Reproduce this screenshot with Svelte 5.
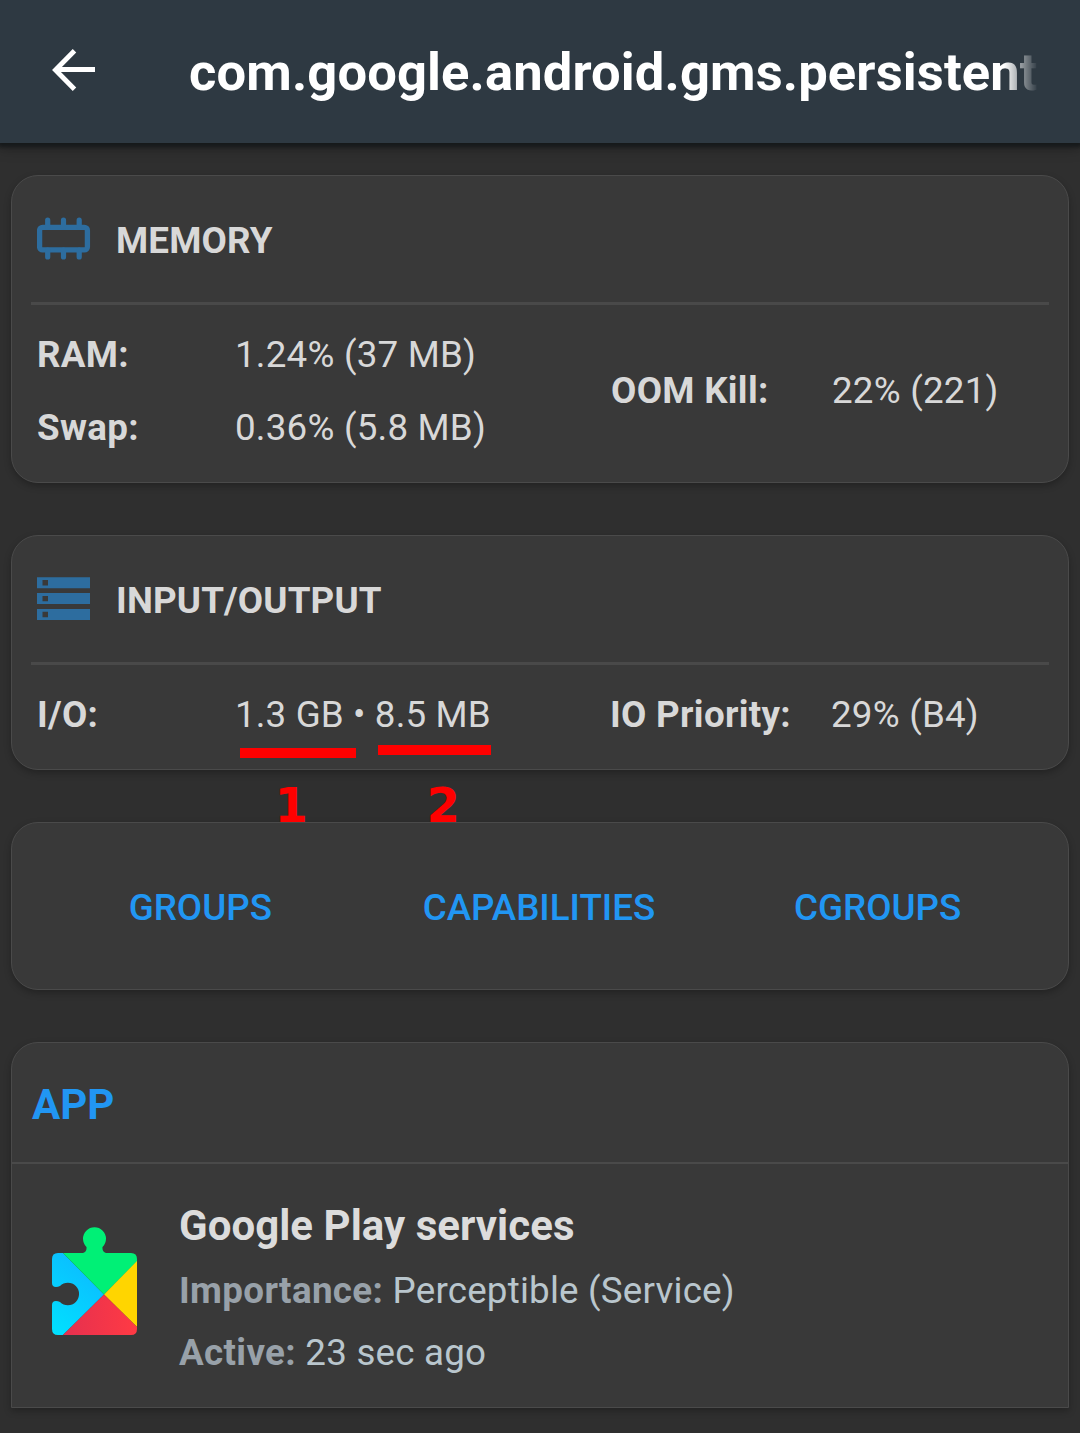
<script>
  const memory = [
    { label: 'RAM:', value: '1.24% (37 MB)' },
    { label: 'Swap:', value: '0.36% (5.8 MB)' },
  ];
  const actions = ['GROUPS', 'CAPABILITIES', 'CGROUPS'];
</script>

<div class="screen">
  <header class="toolbar">
    <svg class="back" viewBox="0 0 44 42" aria-label="Back">
      <path d="M22.5 1.8 3.5 21l19 19.2M4 20.500h39" fill="none" stroke="#fff" stroke-width="4.9" />
    </svg>
    <h1>com.google.android.gms.persistent</h1>
  </header>

  <main>
    <section class="card">
      <div class="head">
        <svg class="icon" viewBox="0 0 54 44">
          <rect x="2.6" y="10.3" width="47.8" height="22.6" rx="3" fill="none" stroke="#2d6d9f" stroke-width="5.3" />
          <path d="M10.700 10V3.2M26.500 10V3.2M42.200 10V3.2M10.700 33v7M26.500 33v7M42.200 33v7" fill="none" stroke="#2d6d9f" stroke-width="5.2" stroke-linecap="round" />
        </svg>
        <h2>MEMORY</h2>
      </div>
      <div class="rule"></div>
      <div class="body">
        <div class="col">
          {#each memory as row}
            <div class="row"><b>{row.label}</b><span>{row.value}</span></div>
          {/each}
        </div>
        <div class="col right">
          <div class="row"><b>OOM Kill:</b><span>22% (221)</span></div>
        </div>
      </div>
    </section>

    <section class="card">
      <div class="head">
        <svg class="icon" viewBox="0 0 54 44">
          <path fill="#2d6d9f" fill-rule="evenodd" d="M0 .2h53v11H0zM5.5 3v5.4H11V3zM0 16.1h53v11H0zM5.5 18.900v5.4H11v-5.4zM0 32h53v11H0zM5.5 34.800v5.4H11v-5.4z" />
        </svg>
        <h2>INPUT/OUTPUT</h2>
      </div>
      <div class="rule"></div>
      <div class="body">
        <div class="col">
          <div class="row"><b>I/O:</b><span class="traffic">1.3 GB • 8.5 MB
            <i class="mark first"></i><i class="mark second"></i>
            <em class="one">1</em><em class="two">2</em>
          </span></div>
        </div>
        <div class="col right io">
          <div class="row"><b>IO Priority:</b><span>29% (B4)</span></div>
        </div>
      </div>
    </section>

    <section class="card actions">
      {#each actions as action}
        <button>{action}</button>
      {/each}
    </section>

    <section class="card app">
      <div class="app-head">APP</div>
      <div class="app-body">
        <svg class="logo" viewBox="0 0 85 108">
          <defs>
            <linearGradient id="blue" x1="0" y1="1" x2="0.5" y2="0">
              <stop offset="0" stop-color="#00e2ff" />
              <stop offset="1" stop-color="#0cbcff" />
            </linearGradient>
            <linearGradient id="red" x1="0" x2="1">
              <stop offset="0" stop-color="#e5304f" />
              <stop offset="1" stop-color="#ff3a44" />
            </linearGradient>
            <clipPath id="piece">
              <path d="M6 26H31Q35 25 34.500 20A11.500 11.500 0 1 1 50.500 20Q50 25 54 26H79Q85 26 85 32V102Q85 108 79 108H6Q0 108 0 102V78Q0 74 4 74Q6 74 8 75A11.200 11.200 0 1 0 8 59Q6 60 4 60Q0 60 0 56V32Q0 26 6 26Z" />
            </clipPath>
          </defs>
          <g clip-path="url(#piece)">
            <path fill="url(#blue)" d="M0 26h11l41 41.500L11 108H0z" />
            <path fill="#00f076" d="M11 26 20 0h45l20 26v8.500L52 67.500z" />
            <path fill="#ffd500" d="M85 34v66L52 67.500z" />
            <path fill="url(#red)" d="M11 108 52 67.500 85 100v8z" />
          </g>
        </svg>
        <div class="details">
          <h3>Google Play services</h3>
          <p><b>Importance:</b> <span>Perceptible (Service)</span></p>
          <p><b>Active:</b> <span>23 sec ago</span></p>
        </div>
      </div>
    </section>
  </main>
</div>

<style>
  :global(body) {
    background: #2f2f2f;
  }
  .screen {
    box-sizing: border-box;
    width: 1080px;
    height: 1433px;
    overflow: hidden;
    background: #2f2f2f;
    color: #d8d8d8;
    font: 400 36.75px/44px Roboto, sans-serif;
  }
  h1, h2, h3, p {
    margin: 0;
    font-size: inherit;
    white-space: nowrap;
  }
  b, h1, h2, h3 {
    font-weight: 700;
  }
  .toolbar {
    box-sizing: border-box;
    display: flex;
    align-items: center;
    height: 143px;
    padding: 0 42px 4px 52px;
    background: #2e3942;
    box-shadow: 0 2px 4px 2px #16191b, 0 4px 14px #0005;
  }
  .back {
    width: 44px;
    height: 42px;
    flex: none;
  }
  h1 {
    flex: 1;
    margin: 4px 0 0 93px;
    overflow: hidden;
    color: #fff;
    font-size: 52.5px;
    line-height: 64px;
    letter-spacing: 0.14px;
    mask-image: linear-gradient(to right, #000 calc(100% - 34px), transparent);
  }
  main {
    display: flex;
    flex-direction: column;
    gap: 52px;
    padding: 32px 11px 0;
  }
  .card {
    box-sizing: border-box;
    border: 1px solid #4a4a4a;
    border-radius: 27px;
    background: #393939;
    box-shadow: 0 3px 7px #0004;
  }
  .head {
    display: flex;
    align-items: center;
    height: 126px;
    padding-left: 25px;
  }
  .icon {
    width: 54px;
    height: 44px;
    flex: none;
  }
  h2 {
    margin: 3px 0 0 25px;
    letter-spacing: 0.14px;
  }
  .rule {
    height: 3px;
    margin: 0 19px;
    background: #494949;
  }
  .body {
    display: flex;
    align-items: center;
    padding: 13px 25px 18px;
  }
  .col {
    width: 574px;
  }
  .col.right {
    width: auto;
  }
  .col.io {
    margin-left: -1px;
  }
  .row {
    display: flex;
    align-items: center;
    height: 73px;
    white-space: nowrap;
  }
  .row b {
    width: 198px;
    letter-spacing: 0.3px;
  }
  .right .row b {
    width: 221px;
  }
  .row span {
    letter-spacing: 0.2px;
  }
  .row .traffic {
    position: relative;
    letter-spacing: 0.13px;
  }
  .mark {
    position: absolute;
    height: 10px;
    background: #f00;
  }
  .first {
    left: 5px;
    top: 55px;
    width: 116px;
  }
  .second {
    left: 143px;
    top: 52px;
    width: 113px;
  }
  em {
    position: absolute;
    top: 84px;
    color: #f00;
    font: 700 48px/56px "DejaVu Sans", sans-serif;
    letter-spacing: 0;
  }
  .one {
    left: 39.500px;
  }
  .two {
    left: 191.500px;
  }
  .actions {
    display: grid;
    grid-template-columns: repeat(3, 1fr);
    height: 168px;
    padding: 3px 21px 0 19px;
  }
  button {
    padding: 0;
    border: 0;
    background: none;
    color: #2196f3;
    font: 500 36.75px/44px Roboto, sans-serif;
  }
  .app {
    height: 366px;
    border-radius: 27px 27px 0 0;
  }
  .app-head {
    box-sizing: border-box;
    height: 121px;
    padding: 40px 20px 0;
    border-bottom: 2px solid #4a4a4a;
    color: #2196f3;
    font-size: 42px;
    font-weight: 700;
  }
  .app-body {
    display: flex;
    padding-left: 40px;
  }
  .logo {
    width: 85px;
    height: 108px;
    margin-top: 63px;
    flex: none;
  }
  .details {
    margin: 37px 0 0 42px;
    color: #b9c6cd;
  }
  h3 {
    color: #dcdcdc;
    font-size: 42px;
    line-height: 50px;
    letter-spacing: 0.04px;
  }
  p {
    height: 62px;
    line-height: 62px;
    letter-spacing: 0.2px;
  }
  h3 + p {
    margin-top: 9px;
  }
  p b {
    color: #98a1a9;
    letter-spacing: 0.35px;
  }
</style>
